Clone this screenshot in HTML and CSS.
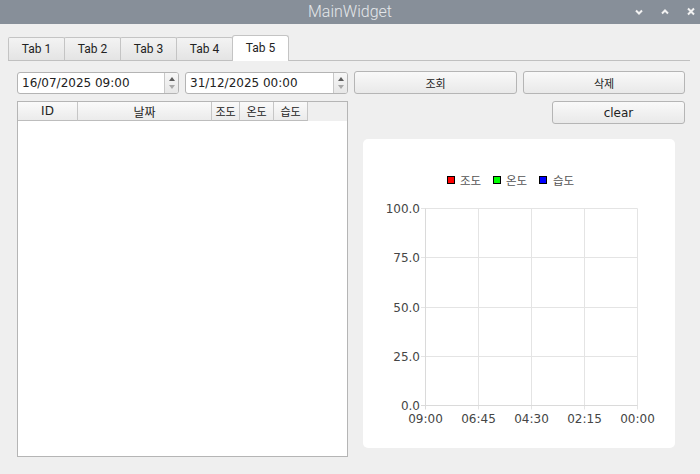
FILE: index.html
```html
<!DOCTYPE html>
<html lang="ko">
<head>
<meta charset="utf-8">
<title>MainWidget</title>
<link rel="stylesheet" href="styles.css">
</head>
<body>
<header class="titlebar">
  <span></span>
  <span class="title">MainWidget</span>
  <div class="wm-buttons">
    <svg viewBox="0 0 10 10"><polyline points="2,3.5 5,6.5 8,3.5" fill="none" stroke="#f2f2f2" stroke-width="2"/></svg>
    <svg viewBox="0 0 10 10"><polyline points="2,6.5 5,3.5 8,6.5" fill="none" stroke="#f2f2f2" stroke-width="2"/></svg>
    <svg viewBox="0 0 10 10"><path d="M2 1.5 L8 7.5 M8 1.5 L2 7.5" fill="none" stroke="#f2f2f2" stroke-width="2"/></svg>
  </div>
</header>
<main class="main">
  <nav class="tabbar">
    <div class="tab">Tab 1</div>
    <div class="tab">Tab 2</div>
    <div class="tab">Tab 3</div>
    <div class="tab">Tab 4</div>
    <div class="tab active">Tab 5</div>
  </nav>
  <section class="page">
    <div class="toolbar">
      <div class="datetime"><span class="dt-text">16/07/2025 09:00</span><span class="spin"><i class="up"></i><i class="down"></i></span></div>
      <div class="datetime"><span class="dt-text">31/12/2025 00:00</span><span class="spin"><i class="up"></i><i class="down"></i></span></div>
      <button class="btn ko">조회</button>
      <button class="btn ko">삭제</button>
    </div>
    <div class="content">
      <div class="table">
        <div class="thead">
          <div class="th c-id">ID</div>
          <div class="th c-date ko">날짜</div>
          <div class="th c-lux ko">조도</div>
          <div class="th c-temp ko">온도</div>
          <div class="th c-hum ko">습도</div>
        </div>
      </div>
      <div class="side">
        <button class="btn clear">clear</button>
        <div class="chart-card">
          <svg class="chart" width="312" height="309" viewBox="0 0 312 309">
            <g class="legend">
              <rect x="84.5" y="37.5" width="7" height="7" fill="#ff0000" stroke="#000"/>
              <text x="97" y="45.5">조도</text>
              <rect x="130.5" y="37.5" width="7" height="7" fill="#00ff00" stroke="#000"/>
              <text x="143" y="45.5">온도</text>
              <rect x="176.5" y="37.5" width="7" height="7" fill="#0000ff" stroke="#000"/>
              <text x="190" y="45.5">습도</text>
            </g>
            <g class="grid">
              <line x1="58" y1="69.5" x2="274.5" y2="69.5"/>
              <line x1="58" y1="118.5" x2="274.5" y2="118.5"/>
              <line x1="58" y1="168.5" x2="274.5" y2="168.5"/>
              <line x1="58" y1="217.5" x2="274.5" y2="217.5"/>
              <line x1="115.5" y1="69.5" x2="115.5" y2="270.5"/>
              <line x1="168.5" y1="69.5" x2="168.5" y2="270.5"/>
              <line x1="221.5" y1="69.5" x2="221.5" y2="270.5"/>
              <line x1="274.5" y1="69.5" x2="274.5" y2="270.5"/>
            </g>
            <g class="axis">
              <line x1="62.5" y1="69.5" x2="62.5" y2="270.5"/>
              <line x1="58" y1="266.5" x2="274.5" y2="266.5"/>
            </g>
            <g class="ylabels">
              <text x="57" y="74">100.0</text>
              <text x="57" y="123">75.0</text>
              <text x="57" y="173">50.0</text>
              <text x="57" y="222">25.0</text>
              <text x="57" y="271">0.0</text>
            </g>
            <g class="xlabels">
              <text x="62.5" y="284">09:00</text>
              <text x="115.5" y="284">06:45</text>
              <text x="168.5" y="284">04:30</text>
              <text x="221.5" y="284">02:15</text>
              <text x="274.5" y="284">00:00</text>
            </g>
          </svg>
        </div>
      </div>
    </div>
  </section>
</main>
</body>
</html>
```
FILE: styles.css
```css
* { box-sizing: border-box; }
html, body { margin: 0; padding: 0; }
body {
  width: 700px;
  height: 474px;
  overflow: hidden;
  background: #efefef;
  font-family: "DejaVu Sans", "Noto Sans CJK KR", sans-serif;
  font-size: 12px;
  color: #222;
}
.ko { font-family: "DejaVu Sans", "Noto Sans CJK KR", sans-serif; font-size: 11px; }

.titlebar {
  height: 24px;
  background: #878f99;
  display: grid;
  grid-template-columns: 1fr auto 1fr;
  align-items: center;
}
.title {
  font-family: Roboto, sans-serif;
  font-weight: 300;
  font-size: 16px;
  line-height: 24px;
  color: #e4e7ea;
}
.wm-buttons {
  justify-self: end;
  display: flex;
  align-items: center;
  gap: 16px;
  padding-right: 4px;
}
.wm-buttons svg { width: 10px; height: 10px; display: block; }

.main { padding: 11px 10px 0 8px; }
.tabbar {
  display: flex;
  align-items: flex-end;
  height: 26px;
  border-bottom: 1px solid #c0c0c0;
}
.tab {
  width: 57px;
  height: 23px;
  margin-right: -1px;
  border: 1px solid #c4c4c4;
  border-bottom: 0;
  border-radius: 2px 2px 0 0;
  background: linear-gradient(#f3f3f3, #e4e4e4);
  font-family: Roboto, sans-serif;
  font-size: 12px;
  color: #222;
  display: flex;
  align-items: center;
  justify-content: center;
}
.tab.active {
  height: 26px;
  margin-bottom: -1px;
  background: #fff;
  border-radius: 3px 3px 0 0;
  position: relative;
  z-index: 1;
  padding-bottom: 2px;
}

.page { padding: 10px 5px 0 9px; }
.toolbar {
  display: grid;
  grid-template-columns: 162px 163px 163px 162px;
  column-gap: 6px;
  height: 23px;
  align-items: center;
}
.datetime {
  height: 22px;
  border: 1px solid #b4b4b4;
  border-radius: 3px;
  background: #fff;
  display: flex;
  overflow: hidden;
}
.dt-text { flex: 1; padding-left: 4px; line-height: 20px; }
.spin {
  width: 14px;
  border-left: 1px solid #c8c8c8;
  background: linear-gradient(#f7f7f7, #e7e7e7);
  display: flex;
  flex-direction: column;
  align-items: center;
  justify-content: center;
  gap: 4px;
}
.spin i { display: block; width: 0; height: 0; border-left: 3px solid transparent; border-right: 3px solid transparent; }
.spin .up { border-bottom: 4px solid #5c5c5c; }
.spin .down { border-top: 4px solid #a8a8a8; }

.btn {
  height: 23px;
  padding: 0;
  border: 1px solid #b5b5b5;
  border-radius: 3px;
  background: linear-gradient(#f9f9f9, #e9e9e9);
  color: #222;
  font-family: "DejaVu Sans", "Noto Sans CJK KR", sans-serif;
  font-size: 12px;
}
.btn.ko { font-size: 11px; }

.content { display: flex; margin-top: 7px; }
.table {
  width: 331px;
  height: 356px;
  border: 1px solid #b5b5b5;
  background: #fff;
}
.thead { display: flex; height: 19px; background: #efefef; }
.th {
  height: 19px;
  border-right: 1px solid #c6c6c6;
  border-bottom: 1px solid #bdbdbd;
  background: linear-gradient(#fafafa, #ebebeb);
  display: flex;
  align-items: center;
  justify-content: center;
  color: #222;
}
.c-id { width: 60px; font-size: 12px; }
.c-date { width: 134px; font-size: 12px; }
.c-lux { width: 28px; }
.c-temp { width: 34px; }
.c-hum { width: 34px; }

.side {
  flex: 1;
  display: flex;
  flex-direction: column;
  margin-left: 6px;
}
.btn.clear { align-self: flex-end; width: 133px; }
.chart-card {
  margin: 15px 10px 0 9px;
  height: 309px;
  background: #fff;
  border-radius: 5px;
}
.chart { display: block; }
.chart text { font-family: "DejaVu Sans", sans-serif; font-size: 12px; fill: #454545; }
.chart .legend text { font-family: "Noto Sans CJK KR", sans-serif; font-size: 11.5px; fill: #555; }
.chart .grid line { stroke: #e4e4e4; stroke-width: 1; }
.chart .axis line { stroke: #dadada; stroke-width: 1; }
.chart .ylabels text { text-anchor: end; }
.chart .xlabels text { text-anchor: middle; }
```
